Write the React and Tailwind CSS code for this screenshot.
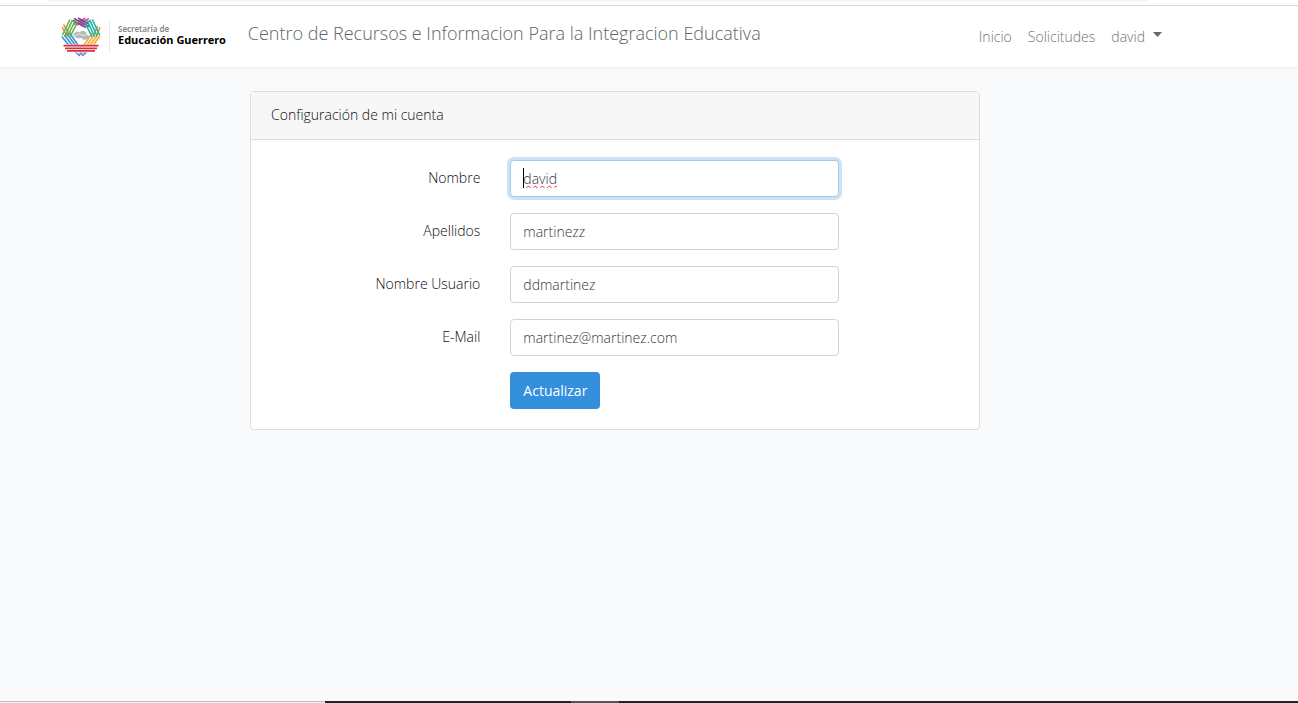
import React from "react";

function Emblem() {
  return (
    <svg viewBox="0 0 40 40" className="h-10 w-10 shrink-0" fill="none" aria-hidden="true">
      <path d="M1 10l5 9M2.500 7.500l6 10M36.500 9l-4 10M39 10l-4 11" stroke="#f08a4b" strokeWidth="1.5" />
      <g strokeWidth="1.5">
        <path d="M28 1.500L16 8M24.500 1L13 7.500M29 4l-9 5" stroke="#e0559b" />
        <path d="M13 1.500l15 8M17 1l11 6M12 3.500l13 7" stroke="#7d3f98" />
      </g>
      <g strokeWidth="1.5">
        <path d="M12 33l7 6M16 33l6.500 5.500M20 33l5 4" stroke="#3f8fd2" />
        <path d="M28 33l-7 6M24 33l-6.500 5.500" stroke="#8c7cc0" />
      </g>
      <path d="M.8 19.500l8 10M3.300 18l8.500 11M5.800 16.500l9 12.500M8.300 15.500l9 13" stroke="#3a93d6" strokeWidth="1.6" />
      <path d="M39.200 18.500l-8 11M36.700 17.500l-8.500 12M34.200 16.500l-9 13M31.700 15.500l-9 13" stroke="#f4ae35" strokeWidth="1.6" />
      <path d="M9 2.500L1.500 18M11.600 2.800L4 18.800M14.200 3.500L6.500 19.500M16.600 5L9 20" stroke="#62b345" strokeWidth="1.6" />
      <path d="M31.300 2.500L38.700 18M28.700 2.800L36 18.800M26.100 3.500L33.500 19.500M23.700 5L31 20" stroke="#19b5a5" strokeWidth="1.6" />
      <path d="M1.500 27.500h37l-5 8h-27z" fill="#fff" />
      <path d="M2.500 28.700h35M4 31.300h32M6 33.900h28" stroke="#d9303f" strokeWidth="1.8" />
      <path d="M12 17l3.500-2.500 3 .5 3-1.500 3.500 1.500.5 2.500 3 1.500-1.500 3-4 1-3-2-3.500.5-3-2z" fill="#b8b8b8" />
      <path d="M14 18.500l4-2 2 1.500 5 .5" stroke="#e6e6e6" />
    </svg>
  );
}

function Logo() {
  return (
    <a href="#inicio" className="flex items-center" aria-label="Secretaría de Educación Guerrero">
      <Emblem />
      <span className="ml-2 h-8 w-px bg-[#ececec]" />
      <span className="ml-2 flex flex-col whitespace-nowrap pb-1 font-['Noto_Sans',sans-serif]">
        <span className="text-[8px] font-semibold leading-[10px] text-[#858585]">Secretaría de</span>
        <span className="text-[11px] font-bold leading-[11px] text-black">Educación Guerrero</span>
      </span>
    </a>
  );
}

const FIELDS = [
  { id: "nombre", label: "Nombre", value: "david", type: "text", active: true },
  { id: "apellidos", label: "Apellidos", value: "martinezz", type: "text" },
  { id: "usuario", label: "Nombre Usuario", value: "ddmartinez", type: "text" },
  { id: "email", label: "E-Mail", value: "martinez@martinez.com", type: "email" },
];

function Field({ id, label, value, type, active }) {
  return (
    <div className="-mx-[15px] mb-4 flex">
      <label htmlFor={id} className="w-1/3 px-[15px] py-2 text-right leading-5">
        {label}
      </label>
      <div className="w-1/2 px-[15px]">
        <div className="relative">
          <input
            id={id}
            type={type}
            defaultValue={value}
            className={
              active
                ? "h-[37px] w-full rounded border border-[#a1cbef] bg-white px-3 pb-px text-[#34393e] underline decoration-red-500 decoration-wavy decoration-1 shadow-[0_0_0_3px_#cde3f5] outline-none"
                : "h-[37px] w-full rounded border border-[#ced4da] bg-white px-3 pb-px text-[#34393e] outline-none"
            }
          />
          {active && <span className="absolute left-[13px] top-2 h-5 w-px bg-black" />}
        </div>
      </div>
    </div>
  );
}

export default function App() {
  return (
    <div className="flex min-h-screen flex-col bg-[#f8fafc] font-['Open_Sans',sans-serif] text-[14px] font-light text-[#0b0e11]">
      <div className="h-[6px] border-b border-[#d8dadd] bg-white">
        <div className="ml-12 h-px w-[1100px] bg-[#f1f3f4]" />
      </div>
      <header className="bg-white shadow-[0_1px_3px_rgba(0,0,0,0.05)]">
        <div className="ml-[45px] flex h-[61px] max-w-[1140px] items-center px-4">
          <Logo />
          <a href="#inicio" className="ml-[22px] mb-2 whitespace-nowrap text-[18px] leading-6 text-[#5c656d]">
            Centro de Recursos e Informacion Para la Integracion Educativa
          </a>
          <nav className="ml-auto flex gap-4 pb-px pr-[7px] text-[#737373]">
            <a href="#inicio">Inicio</a>
            <a href="#solicitudes">Solicitudes</a>
            <button type="button" className="flex items-center gap-2">
              david
              <svg viewBox="0 0 9 5" className="mb-1 h-[5px] w-[9px]" fill="#666" aria-hidden="true">
                <path d="M0 0h9L4.500 5z" />
              </svg>
            </button>
          </nav>
        </div>
      </header>
      <main className="ml-[45px] flex max-w-[1140px] flex-1 items-start justify-center py-6">
        <section className="w-full max-w-[730px] rounded border border-[#dcdfe1] bg-white">
          <h1 className="border-b border-[#dcdfe1] bg-[#f7f7f7] px-5 pb-[13px] pt-3 leading-[22px]">
            Configuración de mi cuenta
          </h1>
          <form className="p-5" onSubmit={(e) => e.preventDefault()}>
            {FIELDS.map((field) => (
              <Field key={field.id} {...field} />
            ))}
            <div className="-mx-[15px] flex">
              <div className="ml-[33.333%] px-[15px]">
                <button
                  type="submit"
                  className="h-[37px] rounded bg-[#3490dc] px-[13px] pb-px font-normal text-white"
                >
                  Actualizar
                </button>
              </div>
            </div>
          </form>
        </section>
      </main>
      <div className="flex h-[2px]">
        <div className="w-1/4 border-t border-[#bcbcbc] bg-[#f1f1f1]" />
        <div className="flex flex-1 bg-[#202124]">
          <div className="ml-[246px] w-12 bg-[#55565a]" />
        </div>
      </div>
    </div>
  );
}
